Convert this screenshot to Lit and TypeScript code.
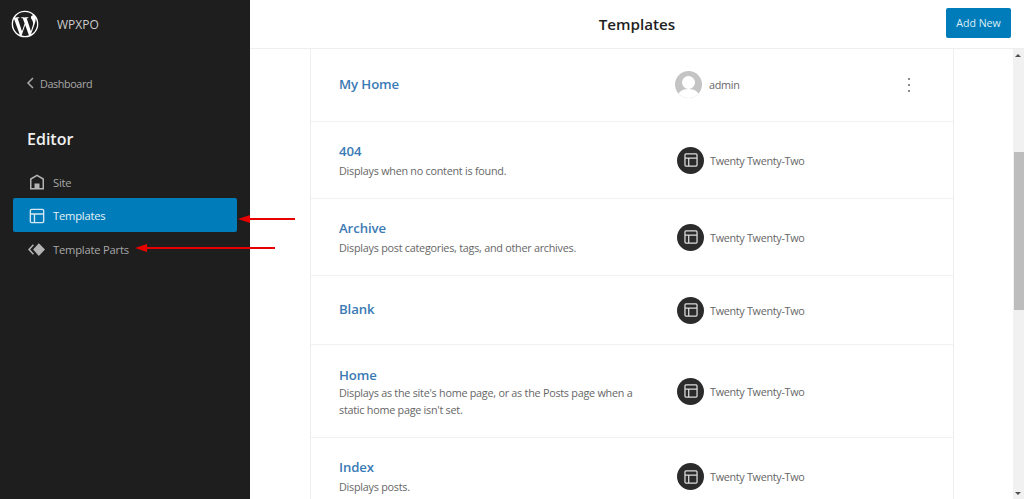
import { LitElement, html, css, svg } from "lit";
import { customElement } from "lit/decorators.js";

const layoutPath = "M18 5.5H6a.5.5 0 00-.5.5v3h13V6a.5.5 0 00-.5-.5zm.5 5H10v8h8a.5.5 0 00.5-.5v-7.5zm-10 0h-3V18a.5.5 0 00.5.5h2.5v-8zM6 4h12a2 2 0 012 2v12a2 2 0 01-2 2H6a2 2 0 01-2-2V6a2 2 0 012-2z";

const rows = [
  { t: "My Home", d: [], admin: true, h: 73 },
  { t: "404", d: ["Displays when no content is found."], h: 77 },
  { t: "Archive", d: ["Displays post categories, tags, and other archives."], h: 77 },
  { t: "Blank", d: [], h: 69 },
  { t: "Home", d: ["Displays as the site's home page, or as the Posts page when a", "static home page isn't set."], h: 93 },
  { t: "Index", d: ["Displays posts."], h: 77 },
];

@customElement("app-root")
export class AppRoot extends LitElement {
  static styles = css`
    :host { display: block; width: 1024px; height: 499px; overflow: hidden; position: relative; font-family: "Open Sans", "Noto Sans", sans-serif; background: #fff; }
    .app { display: flex; height: 499px; }
    .side { width: 250px; flex: none; background: #1e1e1e; color: #bbb; display: flex; flex-direction: column; }
    .brand { display: flex; align-items: center; height: 48px; padding-left: 9px; gap: 16px; font-size: 12px; color: #ccc; }
    .brand svg { width: 32px; height: 32px; fill: #fff; }
    .back { display: flex; align-items: center; margin: 23px 0 0 26px; height: 24px; font-size: 10.8px; letter-spacing: -0.4px; color: #a8a8a8; gap: 5px; }
    .back svg { width: 9px; height: 14px; fill: none; stroke: #aaa; stroke-width: 1.5; }
    h1 { margin: 32px 0 0 27px; font-size: 16px; line-height: 24px; font-weight: 600; color: #f0f0f0; }
    nav { margin: 14px 13px 0; display: flex; flex-direction: column; width: 224px; }
    .item { display: flex; align-items: center; box-sizing: border-box; height: 33px; padding: 2px 0 0 16px; gap: 8px; font-size: 11.2px; letter-spacing: -0.2px; color: #a8a8a8; border-radius: 2px; }
    .item svg { width: 16px; height: 16px; flex: none; fill: #b4b4b4; margin-top: -2px; }
    .item:last-child { padding-top: 3px; }
    .item:last-child svg { margin: 0 0 0 -1px; width: 17px; height: 17px; }
    .item.on { height: 34px; margin-bottom: -1px; padding-top: 1px; background: #007cba; color: #e6f2f8; }
    .item.on svg { fill: #d5e8f2; width: 22px; height: 22px; margin: 0 -3px; }
    .main { flex: 1; min-width: 0; display: flex; flex-direction: column; }
    header { height: 48px; flex: none; border-bottom: 1px solid #eee; display: flex; align-items: center; position: relative; justify-content: center; }
    header .title { font-size: 15.2px; font-weight: 600; color: #1e1e1e; }
    .add { position: absolute; right: 13px; top: 8px; width: 65px; height: 30px; background: #007cba; color: #dcedf6; border-radius: 2px; font-size: 10.6px; display: flex; align-items: center; justify-content: center; }
    .body { flex: 1; display: flex; min-height: 0; overflow: hidden; }
    .content { flex: 1; padding-left: 60px; }
    .table { width: 642px; border-left: 1px solid #eee; border-right: 1px solid #eee; height: 100%; }
    .row { display: flex; border-bottom: 1px solid #f1f1f1; box-sizing: border-box; padding-left: 28px; position: relative; }
    .row:last-child { border-bottom: 0; }
    .info { width: 338px; flex: none; display: flex; flex-direction: column; justify-content: center; padding-bottom: 1px; box-sizing: border-box; }
    .name { font-size: 13.2px; line-height: 20px; margin-bottom: 1px; font-weight: 600; letter-spacing: -0.1px; color: #3a7ab5; }
    .name.tall { line-height: 24px; margin-bottom: -3px; }
    .desc { font-size: 10.8px; line-height: 17px; letter-spacing: -0.25px; color: #666; white-space: nowrap; }
    .owner { display: flex; align-items: center; font-size: 10.8px; letter-spacing: -0.3px; color: #666; gap: 6px; }
    .owner.me { margin-left: -2px; gap: 7px; padding-bottom: 1px; }
    .badge { width: 27px; height: 27px; border-radius: 50%; background: #2b2b2b; display: flex; align-items: center; justify-content: center; }
    .badge svg { width: 20px; height: 20px; fill: #ddd; }
    .avatar { width: 27px; height: 27px; border-radius: 50%; overflow: hidden; background: #c4c4c4; }
    .avatar svg { display: block; width: 27px; height: 27px; fill: #fff; }
    .dots { position: absolute; right: 42px; top: 50%; margin-top: -7px; width: 3px; display: flex; flex-direction: column; gap: 4px; }
    .dots i { display: block; width: 2px; height: 2px; background: #666; border-radius: 50%; }
    .bar { width: 11px; flex: none; background: #f1f1f1; position: relative; }
    .thumb { position: absolute; left: 1px; right: 0; top: 103px; height: 158px; background: #bdbdbd; }
    .up, .down { position: absolute; left: 2px; width: 0; height: 0; border-left: 3px solid transparent; border-right: 3px solid transparent; }
    .up { top: 5px; border-bottom: 3px solid #505050; }
    .down { bottom: 4px; border-top: 3px solid #505050; }
    .arrows { position: absolute; left: 0; top: 0; width: 1024px; height: 499px; pointer-events: none; }
  `;

  render() {
    return html`
      <div class="app">
        <aside class="side">
          <div class="brand">
            <svg viewBox="0 0 24 24"><path d="M12 2a10 10 0 100 20 10 10 0 000-20zM3.01 12c0-1.3.28-2.54.78-3.66l4.29 11.75A9 9 0 013.01 12zM12 21c-.88 0-1.74-.13-2.54-.37l2.7-7.84 2.76 7.57c.02.04.04.08.06.12A9 9 0 0112 21zm1.24-13.22c.54-.03 1.03-.09 1.03-.09.48-.06.43-.77-.06-.74 0 0-1.46.11-2.4.11-.88 0-2.37-.11-2.37-.11-.48-.03-.54.71-.06.74 0 0 .46.06.94.09l1.4 3.84-1.97 5.9-3.27-9.74c.54-.03 1.03-.09 1.03-.09.48-.06.43-.77-.06-.74 0 0-1.46.11-2.4.11-.17 0-.37 0-.58-.01A9 9 0 0112 3c2.34 0 4.47.89 6.07 2.36h-.12c-.88 0-1.51.77-1.51 1.6 0 .74.43 1.37.88 2.11.34.6.74 1.37.74 2.48 0 .77-.3 1.66-.68 2.91l-.9 3-3.24-9.68zm3.28 12a9 9 0 003.38-12.1c.04.29.06.6.06.93 0 .91-.17 1.94-.69 3.22l-2.75 7.95z" fill-rule="evenodd"/></svg>
            <span>WPXPO</span>
          </div>
          <div class="back">
            <svg viewBox="0 0 9 14"><path d="M7 2L2 7l5 5"/></svg>
            <span>Dashboard</span>
          </div>
          <h1>Editor</h1>
          <nav>
            <div class="item">
              <svg viewBox="0 0 16 16"><path fill-rule="evenodd" d="M8 .5L1 4.6V15.5h14V4.6L8 .5zM8 2.3l5.5 3.2v8.5h-3V9.5h-5V14h-3V5.5L8 2.3z"/></svg>
              <span>Site</span>
            </div>
            <div class="item on">
              <svg viewBox="0 0 24 24"><path fill-rule="evenodd" d="${layoutPath}"/></svg>
              <span>Templates</span>
            </div>
            <div class="item">
              <svg viewBox="0 0 16 16"><path d="M10.2 2L16 8l-5.8 6-5.4-6z"/><path d="M4.6 3L0 8l4.6 5 1-1L2 8l3.6-4z"/></svg>
              <span>Template Parts</span>
            </div>
          </nav>
        </aside>
        <div class="main">
          <header>
            <span class="title">Templates</span>
            <div class="add">Add New</div>
          </header>
          <div class="body">
            <div class="content">
              <div class="table">
                ${rows.map(
                  (r) => html`
                    <div class="row" style="height:${r.h}px">
                      <div class="info">
                        <div class="name ${r.d.length > 1 ? "tall" : ""}">${r.t}</div>
                        ${r.d.map((l) => html`<div class="desc">${l}</div>`)}
                      </div>
                      <div class="owner ${r.admin ? "me" : ""}">
                        ${r.admin
                          ? html`<div class="avatar"><svg viewBox="0 0 27 27"><circle cx="13.5" cy="11.5" r="6.5"/><path d="M2 27c1-6 5-9 11.5-9S24 21 25 27z"/></svg></div><span>admin</span>`
                          : html`<div class="badge"><svg viewBox="0 0 24 24"><path fill-rule="evenodd" d="${layoutPath}"/></svg></div><span>Twenty Twenty-Two</span>`}
                      </div>
                      ${r.admin ? html`<div class="dots"><i></i><i></i><i></i></div>` : ""}
                    </div>
                  `
                )}
              </div>
            </div>
            <div class="bar"><div class="up"></div><div class="thumb"></div><div class="down"></div></div>
          </div>
        </div>
      </div>
      <svg class="arrows" viewBox="0 0 1024 499">
        ${svg`
          <path d="M295 219H248" stroke="#e60000" stroke-width="2" fill="none"/>
          <path d="M238 219l12-4v8z" fill="#e60000"/>
          <path d="M275 248H145" stroke="#e60000" stroke-width="2" fill="none"/>
          <path d="M135 248l12-4v8z" fill="#e60000"/>
        `}
      </svg>
    `;
  }
}
